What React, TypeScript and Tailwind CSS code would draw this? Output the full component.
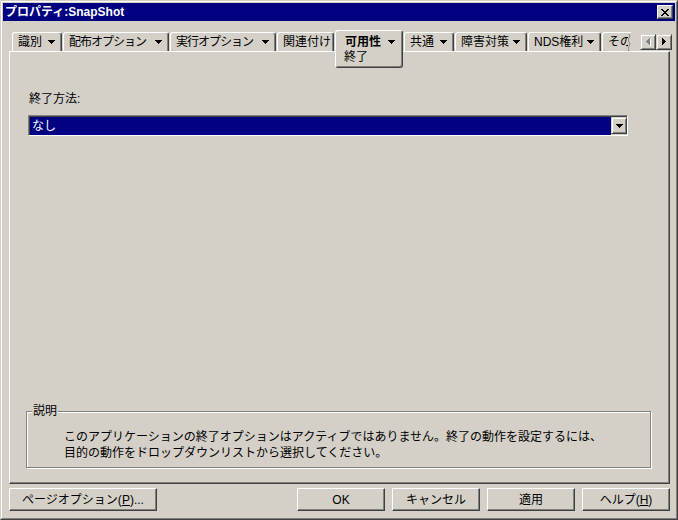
const font = "font-['Liberation_Sans','Noto_Sans_CJK_JP',sans-serif]";

function DownArrow({ className = "" }: { className?: string }) {
  return (
    <svg width="7" height="4" viewBox="0 0 7 4" className={className} shapeRendering="crispEdges">
      <rect x="0" y="0" width="7" height="1" fill="currentColor" />
      <rect x="1" y="1" width="5" height="1" fill="currentColor" />
      <rect x="2" y="2" width="3" height="1" fill="currentColor" />
      <rect x="3" y="3" width="1" height="1" fill="currentColor" />
    </svg>
  );
}

function SideArrow({ dir, disabled }: { dir: "left" | "right"; disabled?: boolean }) {
  const rows = [1, 2, 3, 4, 3, 2, 1];
  const color = disabled ? "#808080" : "#000000";
  return (
    <svg width="5" height="8" viewBox="0 0 5 8" shapeRendering="crispEdges">
      {rows.map((len, i) =>
        dir === "right" ? (
          <rect key={i} x={0} y={i} width={len} height={1} fill={color} />
        ) : (
          <g key={i}>
            {disabled && <rect x={5 - len} y={i + 1} width={len} height={1} fill="#ffffff" />}
            <rect x={4 - len} y={i} width={len} height={1} fill={color} />
          </g>
        )
      )}
    </svg>
  );
}

function CloseGlyph() {
  const rows: [number, number][][] = [
    [[0, 2], [6, 2]],
    [[1, 2], [5, 2]],
    [[2, 4]],
    [[3, 2]],
    [[2, 4]],
    [[1, 2], [5, 2]],
    [[0, 2], [6, 2]],
  ];
  return (
    <svg width="8" height="7" viewBox="0 0 8 7" shapeRendering="crispEdges">
      {rows.map((segs, y) =>
        segs.map(([x, w], j) => <rect key={`${y}-${j}`} x={x} y={y} width={w} height={1} fill="#000" />)
      )}
    </svg>
  );
}

function Tab({ label, className, arrow = true }: { label: string; className: string; arrow?: boolean }) {
  return (
    <div
      className={`mt-[2px] h-[19px] shrink-0 flex items-center justify-between rounded-t-[3px] border-t border-l border-r border-t-white border-l-white border-r-[#404040] shadow-[inset_-1px_0_0_#808080] pl-[5px] pr-[6px] whitespace-nowrap ${className}`}
    >
      <span>{label}</span>
      {arrow && <DownArrow />}
    </div>
  );
}

function Button({ children, className }: { children: React.ReactNode; className: string }) {
  return (
    <div
      className={`h-[23px] flex items-center justify-center border border-t-white border-l-white border-r-[#404040] border-b-[#404040] shadow-[inset_-1px_-1px_0_#808080] whitespace-nowrap ${className}`}
    >
      {children}
    </div>
  );
}

export default function App() {
  return (
    <div className={`w-[678px] h-[520px] bg-[#d4d0c8] text-black text-[12px] leading-[12px] ${font}`}>
      <div className="w-full h-full border border-t-[#d4d0c8] border-l-[#d4d0c8] border-r-[#404040] border-b-[#404040]">
        <div className="w-full h-full border border-t-white border-l-white border-r-[#808080] border-b-[#808080] p-[1px] flex flex-col">
          {/* title bar */}
          <div className="h-[18px] bg-[#000080] flex items-center justify-between pl-[2px] pr-[2px]">
            <span className="text-white font-bold text-[12px]">プロパティ:SnapShot</span>
            <div className="w-[16px] h-[14px] flex items-center justify-center bg-[#d4d0c8] border border-t-white border-l-white border-r-[#404040] border-b-[#404040] shadow-[inset_-1px_-1px_0_#808080]">
              <CloseGlyph />
            </div>
          </div>

          <div className="pl-[6px] flex flex-col">
            {/* tab strip */}
            <div className="mt-[9px] h-[21px] pl-[3px] flex items-start gap-[1px]">
              <Tab label="識別" className="w-[50px]" />
              <Tab label="配布オプション" className="w-[106px] tracking-[-1px]" />
              <Tab label="実行オプション" className="w-[106px] tracking-[-1px]" />
              <Tab label="関連付け" className="w-[57px]" arrow={false} />
              <div className="relative z-10 w-[68px] h-[38px] shrink-0 bg-[#d4d0c8] rounded-[3px] border border-t-white border-l-white border-r-[#404040] border-b-[#404040] shadow-[inset_-1px_-1px_0_#808080] pt-[5px] flex flex-col">
                <div className="h-[12px] flex items-center justify-between pl-[9px] pr-[7px]">
                  <span className="font-bold">可用性</span>
                  <DownArrow />
                </div>
                <div className="mt-[3px] pl-[8px] h-[12px]">終了</div>
              </div>
              <Tab label="共通" className="w-[50px]" />
              <Tab label="障害対策" className="w-[72px]" />
              <Tab label="NDS権利" className="w-[73px]" />
              <div className="mt-[2px] h-[19px] w-[29px] shrink-0 flex items-center rounded-tl-[3px] border-t border-l border-t-white border-l-white">
                <div className="w-[25px] overflow-hidden whitespace-nowrap pl-[5px]">その他</div>
                <svg width="3" height="17" viewBox="0 0 3 17">
                  <path d="M1 0 Q3 2 1 4 Q-1 6 1 8 Q3 10 1 12 Q-1 14 1 17" stroke="#808080" fill="none" />
                </svg>
              </div>
              <div className="ml-[8px] mt-[4px] flex">
                <div className="w-[16px] h-[16px] flex items-center justify-center border border-t-[#d4d0c8] border-l-[#d4d0c8] border-r-[#404040] border-b-[#404040] shadow-[inset_1px_1px_0_#fff,inset_-1px_-1px_0_#808080]">
                  <SideArrow dir="left" disabled />
                </div>
                <div className="w-[16px] h-[16px] flex items-center justify-center border border-t-[#d4d0c8] border-l-[#d4d0c8] border-r-[#404040] border-b-[#404040] shadow-[inset_1px_1px_0_#fff,inset_-1px_-1px_0_#808080] pl-[1px]">
                  <SideArrow dir="right" />
                </div>
              </div>
            </div>

            {/* panel */}
            <div className="w-[661px] h-[433px] border border-t-white border-l-white border-r-[#404040] border-b-[#404040] shadow-[inset_-1px_-1px_0_#808080] flex flex-col">
              <div className="mt-[41px] ml-[19px] h-[12px]">終了方法:</div>
              <div className="mt-[10px] ml-[18px] w-[600px] h-[21px] flex border border-t-[#808080] border-l-[#808080] border-r-white border-b-white shadow-[inset_1px_1px_0_#404040]">
                <div className="flex-1 bg-[#000080] text-white pl-[2px] mt-[1px] ml-[1px] flex items-center">なし</div>
                <div className="w-[16px] h-[17px] mt-[1px] flex items-center justify-center bg-[#d4d0c8] border border-t-[#d4d0c8] border-l-[#d4d0c8] border-r-[#404040] border-b-[#404040] shadow-[inset_1px_1px_0_#fff,inset_-1px_-1px_0_#808080]">
                  <DownArrow />
                </div>
              </div>

              <div className="mt-auto mb-[15px] ml-[16px] w-[625px] h-[57px] relative border border-[#808080] shadow-[1px_1px_0_#fff,inset_1px_1px_0_#fff] pt-[17px] pl-[37px] leading-[16px]">
                <span className="absolute left-[5px] top-[-7px] px-[1px] bg-[#d4d0c8] leading-[12px]">説明</span>
                <div>このアプリケーションの終了オプションはアクティブではありません。終了の動作を設定するには、</div>
                <div>目的の動作をドロップダウンリストから選択してください。</div>
              </div>
            </div>

            {/* buttons */}
            <div className="mt-[4px] w-[661px] flex">
              <Button className="w-[148px]">
                ページオプション(<span className="underline">P</span>)...
              </Button>
              <div className="ml-auto flex gap-[7px]">
                <Button className="w-[88px]">OK</Button>
                <Button className="w-[88px]">キャンセル</Button>
                <Button className="w-[88px]">適用</Button>
                <Button className="w-[88px]">
                  ヘルプ(<span className="underline">H</span>)
                </Button>
              </div>
            </div>
          </div>
        </div>
      </div>
    </div>
  );
}
